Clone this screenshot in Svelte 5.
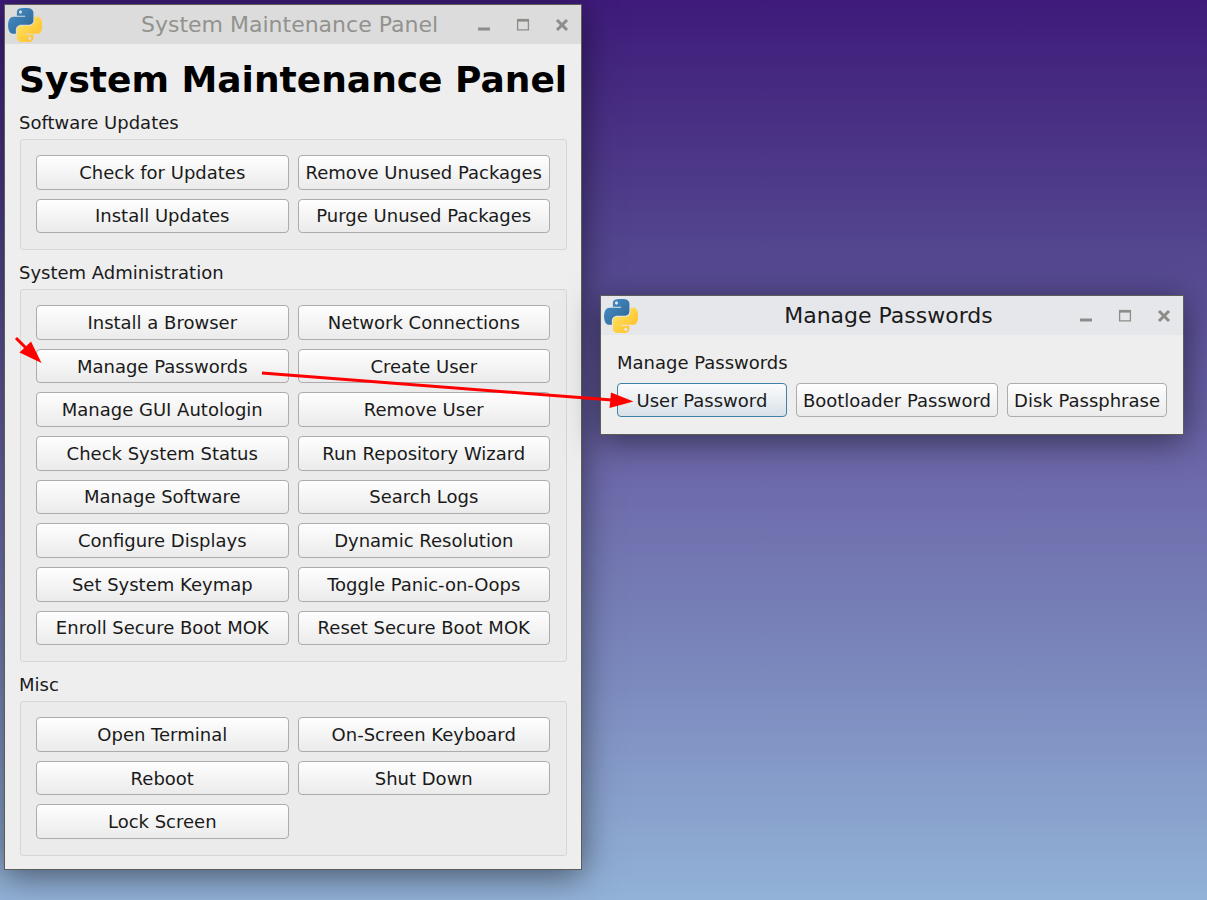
<script>
  const sections = [
    {
      title: 'Software Updates',
      actions: [
        'Check for Updates', 'Remove Unused Packages',
        'Install Updates', 'Purge Unused Packages',
      ],
    },
    {
      title: 'System Administration',
      actions: [
        'Install a Browser', 'Network Connections',
        'Manage Passwords', 'Create User',
        'Manage GUI Autologin', 'Remove User',
        'Check System Status', 'Run Repository Wizard',
        'Manage Software', 'Search Logs',
        'Configure Displays', 'Dynamic Resolution',
        'Set System Keymap', 'Toggle Panic-on-Oops',
        'Enroll Secure Boot MOK', 'Reset Secure Boot MOK',
      ],
    },
    {
      title: 'Misc',
      actions: [
        'Open Terminal', 'On-Screen Keyboard',
        'Reboot', 'Shut Down',
        'Lock Screen',
      ],
    },
  ]

  const passwordActions = ['User Password', 'Bootloader Password', 'Disk Passphrase']

  let selected = $state('User Password')
</script>

{#snippet titlebar(title)}
  <header class="titlebar">
    <svg class="app-icon" viewBox="0 0 110 110" aria-hidden="true">
      <defs>
        <linearGradient id="py-blue" x1="0" y1="0" x2="1" y2="1">
          <stop offset="0" stop-color="#4590cc" />
          <stop offset="1" stop-color="#2f638f" />
        </linearGradient>
        <linearGradient id="py-yellow" x1="0" y1="0" x2="1" y2="1">
          <stop offset="0" stop-color="#ffe868" />
          <stop offset="1" stop-color="#ffb91f" />
        </linearGradient>
      </defs>
      <path fill="url(#py-blue)" d="M54.9 0c-4.6 0-9 .4-12.8 1.1C30.8 3.1 28.7 7.300 28.7 15v10.200h26.800v3.400H18.700c-7.800 0-14.600 4.700-16.700 13.600-2.500 10.200-2.600 16.600 0 27.300 1.900 7.900 6.500 13.600 14.200 13.600h9.200V70.800c0-8.900 7.700-16.700 16.700-16.700h26.700c7.400 0 13.400-6.100 13.400-13.600V15c0-7.200-6.100-12.700-13.400-13.900C64.100.300 59.400 0 54.900 0zM40.400 8.200c2.800 0 5 2.300 5 5.100s-2.200 5.100-5 5.100-5-2.300-5-5.100 2.200-5.100 5-5.100z" />
      <path fill="url(#py-yellow)" d="M85.600 28.700v11.900c0 9.200-7.800 17-16.700 17H42.100c-7.300 0-13.400 6.300-13.400 13.600v25.500c0 7.300 6.300 11.500 13.400 13.600 8.500 2.500 16.600 3 26.800 0 6.700-2 13.400-5.900 13.400-13.600V86.500H55.500v-3.400h40.200c7.800 0 10.700-5.400 13.400-13.600 2.800-8.400 2.700-16.500 0-27.300-1.900-7.800-5.600-13.600-13.400-13.600zM70.600 93.300c2.800 0 5 2.300 5 5.100s-2.200 5.100-5 5.100-5-2.300-5-5.100 2.200-5.100 5-5.100z" />
    </svg>
    <span class="caption">{title}</span>
    <div class="controls">
      <button aria-label="Minimize">
        <svg viewBox="0 0 14 14"><path d="M1 11h12" stroke-width="3" /></svg>
      </button>
      <button aria-label="Maximize">
        <svg viewBox="0 0 14 14"><path d="M1.600 2.500h10.800v9.400H1.600z" stroke-width="1.300" /><path d="M1 2.200h12" stroke-width="2.600" /></svg>
      </button>
      <button aria-label="Close">
        <svg viewBox="0 0 14 14"><path d="M2 2l10 10M12 2L2 12" stroke-width="3" /></svg>
      </button>
    </div>
  </header>
{/snippet}

<main class="desktop">
  <section class="window panel">
    {@render titlebar('System Maintenance Panel')}
    <div class="panel-body">
      <h1>System Maintenance Panel</h1>
      {#each sections as section}
        <h2>{section.title}</h2>
        <div class="group" style="flex-grow: {Math.ceil(section.actions.length / 2)}">
          {#each section.actions as action}
            <button class="action">{action}</button>
          {/each}
        </div>
      {/each}
    </div>
  </section>

  <section class="window dialog active">
    {@render titlebar('Manage Passwords')}
    <div class="dialog-body">
      <h2>Manage Passwords</h2>
      <div class="choices">
        {#each passwordActions as action}
          <button class="action" class:focused={selected === action} onclick={() => (selected = action)}>
            {action}
          </button>
        {/each}
      </div>
    </div>
  </section>

  <!-- Walkthrough arrows over both windows -->
  <svg class="arrows" width="660" height="420" viewBox="0 0 660 420" aria-hidden="true">
    <path d="M16 338L30 352M262 373L612 400" />
    <polygon points="41.500,363 19.500,352.500 31,341.500" />
    <polygon points="633.500,401.500 609.500,408 611,392.500" />
  </svg>
</main>

<style>
  :global(body) {
    margin: 0;
  }

  .desktop {
    position: relative;
    min-height: 100vh;
    overflow: hidden;
    background: linear-gradient(#3e1b7a 0%, #54468f 28%, #6c68a9 52%, #7b89bd 75%, #92b2d7 100%);
    font-family: 'DejaVu Sans', sans-serif;
    font-size: 18px;
    color: #1a1a1a;
  }

  .window {
    position: absolute;
    box-sizing: border-box;
    display: flex;
    flex-direction: column;
    border: 1px solid #5c5c58;
    background: #eeeeee;
    box-shadow: 0 6px 32px rgba(0, 0, 0, 0.5);
  }

  .panel {
    left: 4px;
    top: 4px;
    width: 578px;
    min-height: 866px;
  }

  .dialog {
    left: 600px;
    top: 295px;
    width: 584px;
    min-height: 140px;
  }

  /* Title bar */
  .titlebar {
    display: flex;
    align-items: center;
    height: 39px;
    background: #dcdcdc;
    color: #92928e;
    font-size: 22px;
  }

  .active .titlebar {
    background: #e6e7eb;
    color: #1a1a1a;
  }

  .app-icon {
    width: 34px;
    height: 34px;
    margin-left: 3px;
  }

  .caption {
    flex: 1;
    padding-left: 60px;
    text-align: center;
    white-space: nowrap;
  }

  .controls {
    display: flex;
    gap: 25px;
    padding-right: 12px;
  }

  .controls button {
    display: flex;
    padding: 0;
    border: 0;
    background: none;
  }

  .controls svg {
    width: 14px;
    height: 14px;
    fill: none;
    stroke: #8c8c88;
  }

  /* Main panel */
  .panel-body {
    flex: 1;
    display: flex;
    flex-direction: column;
    padding: 14px 14px 13px;
  }

  h1 {
    margin: 0 0 10px;
    font-size: 36px;
    line-height: 44px;
    text-align: center;
    white-space: nowrap;
    color: #000;
  }

  h2 {
    margin: 0;
    font-size: 18px;
    font-weight: 400;
    line-height: 22px;
  }

  .group {
    display: grid;
    grid-template-columns: 1fr 1fr;
    gap: 9px;
    margin: 5px 0 12px 1px;
    padding: 15px 16px 16px 15px;
    border: 1px solid #d6d6d6;
    border-radius: 3px;
    background: #ebebeb;
  }

  .group:last-child {
    margin-bottom: 0;
  }

  .action {
    min-height: 34px;
    padding: 0 6px;
    border: 1px solid #acacac;
    border-radius: 4px;
    background: linear-gradient(#fefefe, #ebebeb);
    font: inherit;
    color: inherit;
    white-space: nowrap;
  }

  .action.focused {
    border-color: #3f81a8;
    background: linear-gradient(#fbfcfd, #d8e1e8);
  }

  /* Password dialog */
  .dialog-body {
    padding: 17px 16px 16px;
  }

  .choices {
    display: flex;
    gap: 9px;
    margin-top: 9px;
  }

  .choices .action:first-child {
    flex: 1;
  }

  .arrows {
    position: absolute;
    left: 0;
    top: 0;
    pointer-events: none;
    fill: #f00;
  }

  .arrows path {
    stroke: #f00;
    stroke-width: 3;
  }
</style>
